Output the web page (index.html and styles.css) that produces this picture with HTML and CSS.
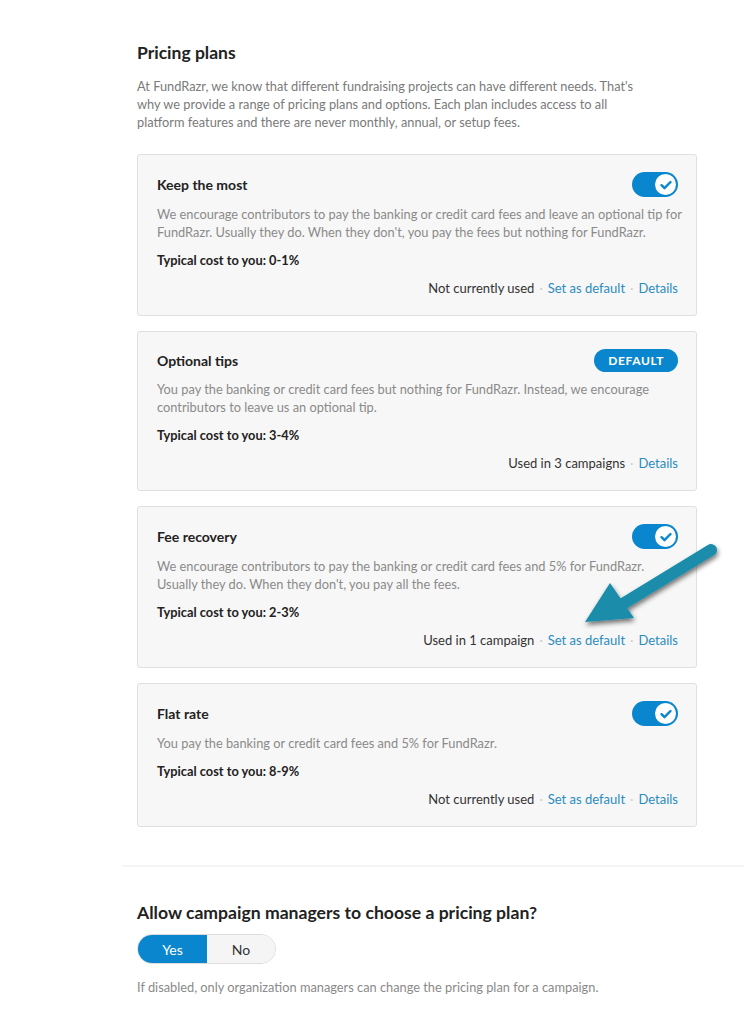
FILE: index.html
```html
<!DOCTYPE html>
<html lang="en">
<head>
<meta charset="utf-8">
<title>Pricing plans</title>
<link rel="stylesheet" href="styles.css">
</head>
<body>
<div class="page">
  <section class="section">
    <h1 class="title">Pricing plans</h1>
    <p class="intro">At FundRazr, we know that different fundraising projects can have different needs. That's<br>why we provide a range of pricing plans and options. Each plan includes access to all<br>platform features and there are never monthly, annual, or setup fees.</p>

    <div class="cards">
      <div class="card">
        <div class="card-head">
          <h2 class="card-title">Keep the most</h2>
          <span class="toggle"><span class="knob"><svg viewBox="0 0 20 20" width="20" height="20"><path d="M5.5 10.2l3 3 6-6.2" fill="none" stroke="#0a86cf" stroke-width="2.4" stroke-linecap="round" stroke-linejoin="round"/></svg></span></span>
        </div>
        <p class="card-desc">We encourage contributors to pay the banking or credit card fees and leave an optional tip for<br>FundRazr. Usually they do. When they don't, you pay the fees but nothing for FundRazr.</p>
        <p class="cost">Typical cost to you: 0-1%</p>
        <div class="card-foot">
          <span class="usage">Not currently used</span>
          <span class="dot">·</span>
          <a class="link">Set as default</a>
          <span class="dot">·</span>
          <a class="link">Details</a>
        </div>
      </div>

      <div class="card">
        <div class="card-head">
          <h2 class="card-title">Optional tips</h2>
          <span class="badge">DEFAULT</span>
        </div>
        <p class="card-desc">You pay the banking or credit card fees but nothing for FundRazr. Instead, we encourage<br>contributors to leave us an optional tip.</p>
        <p class="cost">Typical cost to you: 3-4%</p>
        <div class="card-foot">
          <span class="usage">Used in 3 campaigns</span>
          <span class="dot">·</span>
          <a class="link">Details</a>
        </div>
      </div>

      <div class="card">
        <div class="card-head">
          <h2 class="card-title">Fee recovery</h2>
          <span class="toggle"><span class="knob"><svg viewBox="0 0 20 20" width="20" height="20"><path d="M5.5 10.2l3 3 6-6.2" fill="none" stroke="#0a86cf" stroke-width="2.4" stroke-linecap="round" stroke-linejoin="round"/></svg></span></span>
        </div>
        <p class="card-desc">We encourage contributors to pay the banking or credit card fees and 5% for FundRazr.<br>Usually they do. When they don't, you pay all the fees.</p>
        <p class="cost">Typical cost to you: 2-3%</p>
        <div class="card-foot">
          <span class="usage">Used in 1 campaign</span>
          <span class="dot">·</span>
          <a class="link">Set as default</a>
          <span class="dot">·</span>
          <a class="link">Details</a>
        </div>
      </div>

      <div class="card">
        <div class="card-head">
          <h2 class="card-title">Flat rate</h2>
          <span class="toggle"><span class="knob"><svg viewBox="0 0 20 20" width="20" height="20"><path d="M5.5 10.2l3 3 6-6.2" fill="none" stroke="#0a86cf" stroke-width="2.4" stroke-linecap="round" stroke-linejoin="round"/></svg></span></span>
        </div>
        <p class="card-desc">You pay the banking or credit card fees and 5% for FundRazr.</p>
        <p class="cost">Typical cost to you: 8-9%</p>
        <div class="card-foot">
          <span class="usage">Not currently used</span>
          <span class="dot">·</span>
          <a class="link">Set as default</a>
          <span class="dot">·</span>
          <a class="link">Details</a>
        </div>
      </div>
    </div>
  </section>

  <div class="divider"></div>

  <section class="section section-second">
    <h2 class="question">Allow campaign managers to choose a pricing plan?</h2>
    <div class="segmented">
      <span class="seg seg-on">Yes</span>
      <span class="seg seg-off">No</span>
    </div>
    <p class="help">If disabled, only organization managers can change the pricing plan for a campaign.</p>
  </section>
</div>

<svg class="arrow" width="150" height="110" viewBox="0 0 150 110">
  <defs>
    <filter id="sh" x="-30%" y="-30%" width="160%" height="160%">
      <feGaussianBlur in="SourceAlpha" stdDeviation="2.5"/>
      <feOffset dx="1" dy="3" result="b"/>
      <feComponentTransfer><feFuncA type="linear" slope="0.55"/></feComponentTransfer>
      <feMerge><feMergeNode/><feMergeNode in="SourceGraphic"/></feMerge>
    </filter>
  </defs>
  <g filter="url(#sh)">
    <line x1="130" y1="10" x2="40" y2="65" stroke="#1a8cab" stroke-width="12" stroke-linecap="round"/>
    <polygon points="4,82 29,43 53,78" fill="#1a8cab"/>
  </g>
</svg>
</body>
</html>
```

FILE: styles.css
```css
html, body {
  margin: 0;
  padding: 0;
  background: #ffffff;
}

body {
  font-family: "Lato", "Noto Sans", "Liberation Sans", sans-serif;
  color: #222;
  position: relative;
  width: 744px;
  min-height: 1024px;
  overflow: hidden;
}

.page {
  padding: 41px 0 0 122px;
}

.section {
  padding-left: 15px;
  width: 560px;
}

.title {
  margin: 0;
  font-size: 17.5px;
  line-height: 24px;
  font-weight: 700;
  color: #222;
}

.intro {
  margin: 12px 0 0;
  font-size: 12.8px;
  line-height: 18px;
  color: #7a7a7a;
  white-space: nowrap;
}

.cards {
  margin-top: 23px;
  display: flex;
  flex-direction: column;
  gap: 15px;
}

.card {
  background: #f7f7f7;
  border: 1px solid #e0e0e0;
  border-radius: 3px;
  padding: 17px 18px 18px 19px;
}

.card-head {
  display: flex;
  justify-content: space-between;
  align-items: center;
}

.card-title {
  margin: 0;
  font-size: 14px;
  font-weight: 700;
  color: #222;
  line-height: 20px;
}

.toggle {
  width: 46px;
  height: 25px;
  border-radius: 13px;
  background: #0a86cf;
  display: flex;
  align-items: center;
  justify-content: flex-end;
  padding-right: 2px;
  box-sizing: border-box;
}

.knob {
  width: 21px;
  height: 21px;
  border-radius: 50%;
  background: #fff;
  display: flex;
  align-items: center;
  justify-content: center;
}

.knob svg {
  display: block;
}

.badge {
  background: #0a86cf;
  color: #fff;
  font-size: 12px;
  font-weight: 700;
  letter-spacing: 0.6px;
  height: 23px;
  line-height: 23px;
  border-radius: 12px;
  padding: 0 14px;
}

.card-desc {
  margin: 8px 0 0;
  font-size: 12.8px;
  line-height: 18px;
  color: #8a8a8a;
  white-space: nowrap;
}

.cost {
  margin: 10px 0 0;
  font-size: 12.8px;
  line-height: 18px;
  font-weight: 700;
  color: #222;
}

.card-foot {
  margin-top: 10px;
  display: flex;
  justify-content: flex-end;
  align-items: center;
  gap: 5px;
  font-size: 13px;
  line-height: 18px;
}

.usage {
  color: #333;
}

.dot {
  color: #cfcfcf;
}

.link {
  color: #2a8cc0;
  cursor: pointer;
}

.divider {
  margin-top: 38px;
  height: 2px;
  background: #f4f4f4;
  width: 622px;
}

.section-second {
  padding-top: 35px;
}

.question {
  margin: 0;
  font-size: 17.6px;
  line-height: 22px;
  font-weight: 700;
  color: #222;
}

.segmented {
  margin-top: 10px;
  display: inline-flex;
  height: 30px;
  border-radius: 15px;
  overflow: hidden;
  border: 1px solid #dcdcdc;
  box-sizing: border-box;
}

.seg {
  width: 69px;
  display: flex;
  align-items: center;
  justify-content: center;
  font-size: 14px;
}

.seg-on {
  background: #0a86cf;
  color: #fff;
}

.seg-off {
  background: #f5f5f5;
  color: #333;
  width: 68px;
}

.help {
  margin: 14px 0 0;
  font-size: 12.8px;
  line-height: 18px;
  color: #8a8a8a;
}

.arrow {
  position: absolute;
  left: 581px;
  top: 540px;
}
```
